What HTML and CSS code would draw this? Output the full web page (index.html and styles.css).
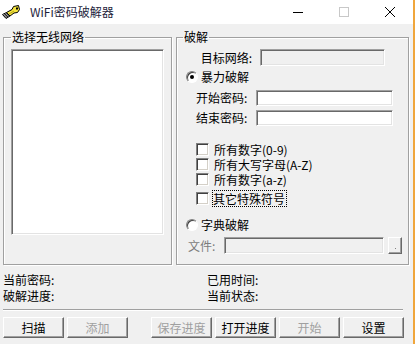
FILE: index.html
```html
<!DOCTYPE html>
<html>
<head>
<meta charset="utf-8">
<title>WiFi密码破解器</title>
<link rel="stylesheet" href="styles.css">
</head>
<body>
<div class="window">
  <div class="titlebar">
    <svg class="appicon" width="18" height="14" viewBox="0 0 18 14">
      <path d="M0.5 9.5 L4.5 7.5 L8 11 L4 13.5 Z" fill="#fff" stroke="#000" stroke-width="1"/>
      <path d="M1.5 10.5 L5 8.5 M2.5 11.5 L6 9.5 M3.5 12.5 L7 10.5" stroke="#000" stroke-width="1"/>
      <path d="M4.5 7.5 L10 4.5 L11.5 1.5 L16.5 0.5 L17.5 4.5 L15.5 7.5 L12 8 L8 11 Z" fill="#f4e43c" stroke="#000" stroke-width="1" stroke-linejoin="round"/>
      <path d="M7 9 L12 6" stroke="#b8a820" stroke-width="1"/>
      <rect x="14" y="2.5" width="2" height="2" fill="#000"/>
    </svg>
    <span class="title">WiFi密码破解器</span>
    <div class="controls">
      <div class="ctl"><svg width="12" height="12" viewBox="0 0 12 12"><path d="M1 6.5 H11" stroke="#000" stroke-width="1"/></svg></div>
      <div class="ctl"><svg width="12" height="12" viewBox="0 0 12 12"><rect x="1.5" y="1.5" width="9" height="9" fill="none" stroke="#c8c8c8" stroke-width="1"/></svg></div>
      <div class="ctl"><svg width="12" height="12" viewBox="0 0 12 12"><path d="M1 1 L11 11 M11 1 L1 11" stroke="#000" stroke-width="1"/></svg></div>
    </div>
  </div>
  <div class="client">
    <div class="groups">
      <fieldset class="group left">
        <legend>选择无线网络</legend>
        <div class="listbox"></div>
      </fieldset>
      <fieldset class="group right">
        <legend>破解</legend>
        <div class="row r-target">
          <span class="lbl lbl-target">目标网络:</span>
          <div class="edit disabled w-target"></div>
        </div>
        <div class="row r-radio1">
          <span class="radio checked"></span><span class="rtext">暴力破解</span>
        </div>
        <div class="row r-start">
          <span class="lbl lbl-pw">开始密码:</span>
          <div class="edit w-pw"></div>
        </div>
        <div class="row r-end">
          <span class="lbl lbl-pw">结束密码:</span>
          <div class="edit w-pw"></div>
        </div>
        <div class="row chk c1"><span class="checkbox"></span><span class="ctext">所有数字(0-9)</span></div>
        <div class="row chk"><span class="checkbox"></span><span class="ctext">所有大写字母(A-Z)</span></div>
        <div class="row chk"><span class="checkbox"></span><span class="ctext">所有数字(a-z)</span></div>
        <div class="row chk c4"><span class="checkbox"></span><span class="ctext focus">其它特殊符号</span></div>
        <div class="row r-radio2">
          <span class="radio"></span><span class="rtext">字典破解</span>
        </div>
        <div class="row r-file">
          <span class="lbl lbl-file">文件:</span>
          <div class="edit disabled w-file"></div>
          <div class="browse"><span class="dot"></span></div>
        </div>
      </fieldset>
    </div>
    <div class="status">
      <span>当前密码:</span><span>已用时间:</span>
      <span>破解进度:</span><span>当前状态:</span>
    </div>
    <div class="sep"></div>
    <div class="buttons">
      <div class="btn">扫描</div>
      <div class="btn off">添加</div>
      <div class="btn off wide-gap">保存进度</div>
      <div class="btn">打开进度</div>
      <div class="btn off">开始</div>
      <div class="btn">设置</div>
    </div>
  </div>
</div>
</body>
</html>
```
FILE: styles.css
```css
html, body {
  margin: 0;
  padding: 0;
  background: #f0f0f0;
}
body {
  width: 415px;
  height: 344px;
  overflow: hidden;
  font-family: "Noto Sans CJK SC", "Liberation Sans", sans-serif;
  font-size: 12px;
  color: #000;
}
.window {
  width: 413px;
  height: 344px;
  border-right: 2px solid #f0a63c;
  background: #f0f0f0;
}
.titlebar {
  height: 24px;
  background: #fff;
  display: flex;
  align-items: center;
}
.appicon {
  margin-left: 2px;
  flex: none;
}
.title {
  margin-left: 10px;
  line-height: 16px;
  color: #1e1e3c;
}
.controls {
  margin-left: auto;
  display: flex;
  height: 24px;
}
.ctl {
  width: 46px;
  height: 24px;
  display: flex;
  align-items: center;
  justify-content: center;
}
.client {
  padding: 0 0 0 3px;
}
.groups {
  display: flex;
  gap: 4px;
  margin-top: 6px;
}
.group {
  margin: 0;
  box-sizing: border-box;
  height: 235px;
  border: 1px solid #a0a0a0;
  box-shadow: inset 1px 1px 0 #fff, 1px 1px 0 #fff;
  min-width: 0;
}
.group legend {
  padding: 0 1px;
  line-height: 14px;
  font-size: 12px;
}
.left {
  width: 169px;
  padding: 5px 7px 0 7px;
}
.listbox {
  box-sizing: border-box;
  width: 153px;
  height: 186px;
  background: #fff;
  border: 1px solid;
  border-color: #a0a0a0 #fff #fff #a0a0a0;
  box-shadow: inset 1px 1px 0 #696969, inset -1px -1px 0 #e3e3e3;
}
.right {
  width: 233px;
  padding: 0 6px;
}
.row {
  display: flex;
  align-items: center;
}
.lbl {
  flex: none;
  line-height: 16px;
}
.edit {
  box-sizing: border-box;
  background: #fff;
  border: 1px solid;
  border-color: #a0a0a0 #fff #fff #a0a0a0;
  box-shadow: inset 1px 1px 0 #696969, inset -1px -1px 0 #e3e3e3;
  flex: none;
}
.edit.disabled {
  background: #f0f0f0;
}
.r-target {
  margin-top: 5px;
  height: 17px;
}
.lbl-target {
  width: 77px;
  text-align: right;
  padding-right: 8px;
  box-sizing: border-box;
}
.w-target {
  width: 125px;
  height: 17px;
}
.r-radio1 {
  margin-top: 4px;
  height: 14px;
}
.radio {
  flex: none;
  box-sizing: border-box;
  width: 12px;
  height: 12px;
  margin-left: 3px;
  border-radius: 50%;
  background: #fff;
  border: 1px solid;
  border-color: #808080 #fff #fff #808080;
  box-shadow: inset 1px 1px 0 #404040;
  display: flex;
  align-items: center;
  justify-content: center;
}
.radio.checked::after {
  content: "";
  width: 4px;
  height: 4px;
  border-radius: 50%;
  background: #000;
}
.rtext {
  margin-left: 3px;
  line-height: 14px;
}
.r-start {
  margin-top: 6px;
  height: 16px;
}
.r-end {
  margin-top: 4px;
  height: 16px;
}
.lbl-pw {
  margin-left: 13px;
  width: 60px;
}
.w-pw {
  width: 137px;
  height: 16px;
}
.chk {
  height: 15px;
}
.chk.c1 {
  margin-top: 16px;
}
.chk.c4 {
  margin-top: 3px;
  height: 17px;
}
.checkbox {
  flex: none;
  box-sizing: border-box;
  width: 13px;
  height: 13px;
  margin-left: 13px;
  background: #fff;
  border: 1px solid;
  border-color: #808080 #fff #fff #808080;
  box-shadow: inset 1px 1px 0 #404040, inset -1px -1px 0 #d4d0c8;
}
.ctext {
  margin-left: 4px;
  line-height: 14px;
  border: 1px solid transparent;
  padding: 0 1px 0 0;
}
.ctext.focus {
  border: 1px dotted #000;
  margin-left: 3px;
  line-height: 15px;
}
.r-radio2 {
  margin-top: 11px;
  height: 14px;
}
.r-file {
  margin-top: 5px;
  height: 17px;
}
.lbl-file {
  margin-left: 5px;
  width: 36px;
  color: #7c7c7c;
}
.w-file {
  width: 160px;
  height: 17px;
}
.browse {
  flex: none;
  box-sizing: border-box;
  width: 14px;
  height: 17px;
  margin-left: 4px;
  border: 1px solid;
  border-color: #fff #696969 #696969 #fff;
  box-shadow: inset -1px -1px 0 #a0a0a0;
  background: #f0f0f0;
  display: flex;
  align-items: flex-end;
  justify-content: center;
  padding-bottom: 4px;
}
.dot {
  width: 1px;
  height: 1px;
  background: #808080;
}
.status {
  display: grid;
  grid-template-columns: 204px 1fr;
  margin-top: 7px;
  line-height: 16px;
}
.sep {
  width: 400px;
  margin-top: 5px;
  border-top: 1px solid #a0a0a0;
  border-bottom: 1px solid #fff;
}
.buttons {
  display: flex;
  gap: 3px;
  margin-top: 6px;
}
.btn {
  box-sizing: border-box;
  width: 61px;
  height: 21px;
  border: 1px solid;
  border-color: #fff #696969 #696969 #fff;
  box-shadow: inset -1px -1px 0 #a0a0a0;
  background: #f0f0f0;
  display: flex;
  align-items: center;
  justify-content: center;
  line-height: 16px;
}
.btn.off {
  color: #a0a0a0;
}
.btn.wide-gap {
  margin-left: 20px;
}
```
